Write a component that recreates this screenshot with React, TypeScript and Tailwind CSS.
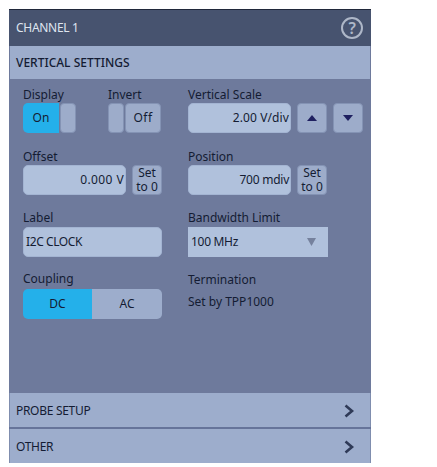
const fieldLabel = "text-[12px] leading-[16px] h-[16px] text-[#141c33]";
const softBtn = "rounded-[4px] bg-[#9dacca] border border-[#8493b4]";
const inputBox = "rounded-[5px] bg-[#b0c1dc] border border-[#a3b4d2]";

const Chevron = () => (
  <svg width="12" height="14" viewBox="0 0 12 14" className="mr-[15px]">
    <path d="M2.5 1.5 L9 7 L2.5 12.5" fill="none" stroke="#2f3a57" strokeWidth="2.6" />
  </svg>
);

const Triangle = ({ up }: { up?: boolean }) => (
  <svg width="10" height="6" viewBox="0 0 10 6">
    <path d={up ? "M5 0 L10 6 L0 6 Z" : "M0 0 L10 0 L5 6 Z"} fill="#1f2060" />
  </svg>
);

const ValueInput = ({ value, className }: { value: string; className: string }) => (
  <div className={`${inputBox} ${className} w-[103px] h-[30px] flex items-center justify-end pr-[1px] text-[12px] text-[#141c33]`}>
    {value}
  </div>
);

const SetToZero = () => (
  <div className={`${softBtn} w-[30px] h-[30px] flex items-center justify-center text-center text-[12px] leading-[14.5px] text-[#141c33]`}>
    Set to 0
  </div>
);

const FootRow = ({ title }: { title: string }) => (
  <div className="h-[34px] pt-[2px] bg-[#9dadcc] border-x border-[#7f8dae] flex items-center justify-between pl-[6px] text-[12px] text-[#141c33] tracking-[-0.3px]">
    <span>{title}</span>
    <Chevron />
  </div>
);

export default function App() {
  return (
    <div className="w-[437px] h-[467px] bg-white pt-[9px] pl-[9px] font-['Noto_Sans',sans-serif]">
      <div className="w-[362px] h-[454px] flex flex-col bg-[#6e7a9c] border-t border-[#20283a]">
        {/* header */}
        <div className="h-[36px] bg-[#47536f] flex items-center justify-between pl-[7px] pr-[8px] text-[12px] text-[#dfe5ef] tracking-[-0.3px]">
          <span>CHANNEL 1</span>
          <div className="w-[22px] h-[22px] rounded-full border-2 border-[#aeb7c8] flex items-center justify-center text-[16px] font-semibold text-[#aeb7c8]">?</div>
        </div>
        <div className="h-[33px] mx-[1px] bg-[#9dadcc] flex items-center pl-[6px] text-[12px] font-medium text-[#141c33]">
          VERTICAL SETTINGS
        </div>

        {/* settings */}
        <div className="flex-1 grid grid-cols-[165px_1fr] pl-[14px] pt-[8px]">
          <div className="flex flex-col">
            <div className="flex">
              <div className="w-[85px]">
                <div className={fieldLabel}>Display</div>
                <div className="flex gap-[1px]">
                  <div className="w-[36px] h-[30px] rounded-l-[5px] bg-[#24b0ea] flex items-center justify-center text-[12px] text-[#141c33]">On</div>
                  <div className={`${softBtn} w-[16px] h-[30px]`} />
                </div>
              </div>
              <div>
                <div className={fieldLabel}>Invert</div>
                <div className="flex gap-[1px]">
                  <div className={`${softBtn} w-[16px] h-[30px]`} />
                  <div className={`${softBtn} w-[36px] h-[30px] flex items-center justify-center text-[12px] text-[#141c33] tracking-[0.5px]`}>Off</div>
                </div>
              </div>
            </div>

            <div className={`${fieldLabel} mt-[16px]`}>Offset</div>
            <div className="flex gap-[6px]">
              <ValueInput value="0.000 V" className="tracking-[0.4px]" />
              <SetToZero />
            </div>

            <div className={`${fieldLabel} mt-[15px]`}>Label</div>
            <div className={`${inputBox} w-[139px] h-[30px] mt-[1px] flex items-center pl-[2px] text-[12px] text-[#141c33] tracking-[-0.4px]`}>I2C CLOCK</div>

            <div className={`${fieldLabel} mt-[14px]`}>Coupling</div>
            <div className="flex w-[139px] h-[30px] mt-[2px] rounded-[5px] overflow-hidden text-[12px] text-[#141c33]">
              <div className="w-[69px] bg-[#24b0ea] flex items-center justify-center">DC</div>
              <div className="flex-1 bg-[#9dadcc] flex items-center justify-center">AC</div>
            </div>
          </div>

          <div className="flex flex-col">
            <div className={fieldLabel}>Vertical Scale</div>
            <div className="flex gap-[6px]">
              <ValueInput value="2.00 V/div" className="tracking-[0.1px]" />
              <div className={`${softBtn} w-[30px] h-[30px] flex items-center justify-center`}><Triangle up /></div>
              <div className={`${softBtn} w-[30px] h-[30px] flex items-center justify-center`}><Triangle /></div>
            </div>

            <div className={`${fieldLabel} mt-[16px]`}>Position</div>
            <div className="flex gap-[6px]">
              <ValueInput value="700 mdiv" className="tracking-[-0.25px]" />
              <SetToZero />
            </div>

            <div className={`${fieldLabel} mt-[15px]`}>Bandwidth Limit</div>
            <div className="w-[140px] h-[30px] mt-[1px] bg-[#b0c1dc] flex items-center justify-between pl-[3px] pr-[12px] text-[12px] text-[#141c33] tracking-[-0.3px]">
              <span>100 MHz</span>
              <svg width="9" height="8" viewBox="0 0 9 8"><path d="M0 0 L9 0 L4.5 8 Z" fill="#75819d" /></svg>
            </div>

            <div className={`${fieldLabel} mt-[15px]`}>Termination</div>
            <div className="text-[12px] leading-[16px] text-[#141c33] mt-[6px]">Set by TPP1000</div>
          </div>
        </div>

        {/* collapsed sections */}
        <FootRow title="PROBE SETUP" />
        <div className="h-[2px] bg-[#66749a]" />
        <FootRow title="OTHER" />
      </div>
    </div>
  );
}
